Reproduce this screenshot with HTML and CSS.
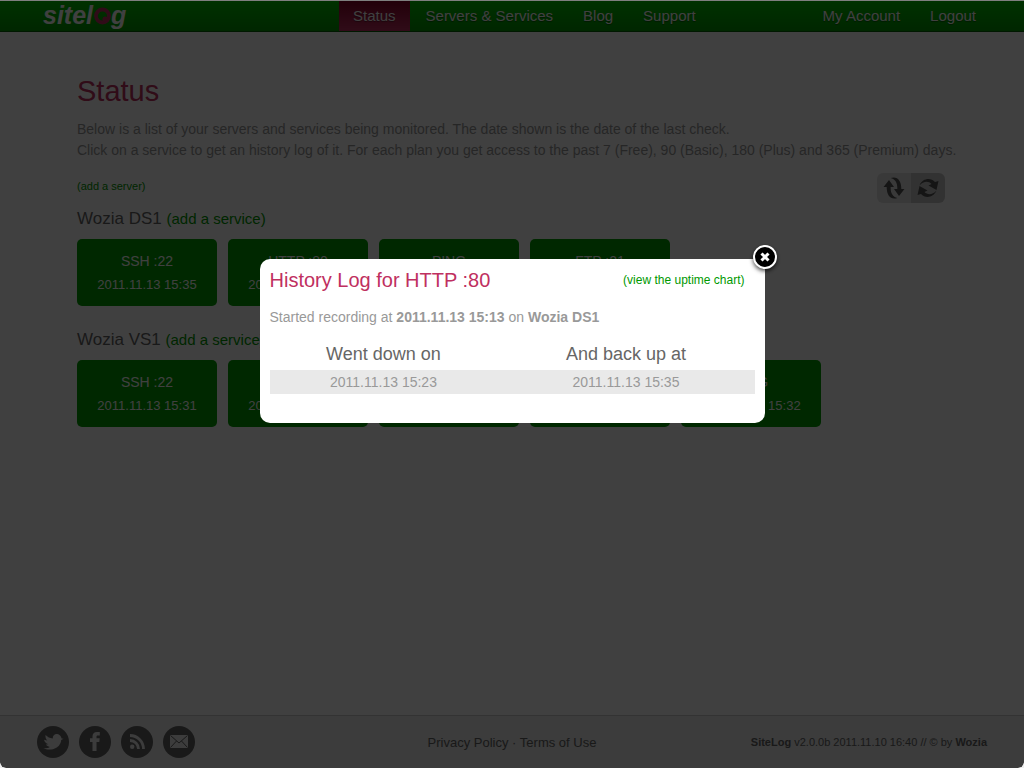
FILE: index.html
```html
<!DOCTYPE html>
<html lang="en">
<head>
<meta charset="utf-8">
<title>SiteLog - Status</title>
<link rel="stylesheet" href="styles.css">
</head>
<body>
<header class="topbar">
  <a class="logo" href="#" aria-label="sitelog">sitel<svg class="logo-o" viewBox="0 0 18 18" aria-hidden="true"><circle cx="9.500" cy="9" r="6.5" fill="none" stroke="#bf3060" stroke-width="3.800"/><circle cx="12.300" cy="12.200" r="2.800" fill="#bf3060"/></svg>g</a>
  <nav class="nav main-nav">
    <a class="active" href="#">Status</a>
    <a href="#">Servers &amp; Services</a>
    <a href="#">Blog</a>
    <a href="#">Support</a>
  </nav>
  <nav class="nav account-nav">
    <a href="#">My Account</a>
    <a href="#">Logout</a>
  </nav>
</header>

<main class="content">
  <h1>Status</h1>
  <p class="intro">Below is a list of your servers and services being monitored. The date shown is the date of the last check.<br>Click on a service to get an history log of it. For each plan you get access to the past 7 (Free), 90 (Basic), 180 (Plus) and 365 (Premium) days.</p>

  <div class="tools">
    <a class="add-server" href="#">(add a server)</a>
    <div class="refresh">
      <button type="button" aria-label="Auto refresh"><svg viewBox="0 0 24 24"><path d="M8.500 2C15.500 -0.500 19.500 5 19.300 13H22.500L17 20L12 13H15.300C15.600 7 13.500 3.200 8.500 2Z"/><path d="M15.500 22C8.500 24.500 4.500 19 4.700 11H1.500L7 4L12 11H8.700C8.400 17 10.500 20.800 15.500 22Z"/></svg></button>
      <button type="button" class="pressed" aria-label="Refresh now"><svg viewBox="0 0 24 24"><path d="M3.500 9.500C6.500 2 15 1.500 19 6L22.500 5L20.500 14L12.500 9.500L15.500 8C12.500 4.800 7.500 5 3.500 9.500Z"/><path d="M20.500 14.500C17.500 22 9 22.500 5 18L1.500 19L3.500 10L11.500 14.500L8.500 16C11.500 19.200 16.500 19 20.500 14.500Z"/></svg></button>
    </div>
  </div>

  <section class="server">
    <h2>Wozia DS1 <a href="#">(add a service)</a></h2>
    <div class="services">
      <button type="button">SSH :22<small>2011.11.13 15:35</small></button>
      <button type="button">HTTP :80<small>2011.11.13 15:35</small></button>
      <button type="button">PING<small>2011.11.13 15:35</small></button>
      <button type="button">FTP :21<small>2011.11.13 15:35</small></button>
    </div>
  </section>
  <section class="server">
    <h2>Wozia VS1 <a href="#">(add a service)</a></h2>
    <div class="services">
      <button type="button">SSH :22<small>2011.11.13 15:31</small></button>
      <button type="button">HTTP :80<small>2011.11.13 15:31</small></button>
      <button type="button">FTP :21<small>2011.11.13 15:31</small></button>
      <button type="button">SMTP :25<small>2011.11.13 15:31</small></button>
      <button type="button">PING<small>2011.11.13 15:32</small></button>
    </div>
  </section>
</main>

<footer class="footer">
  <div class="social">
    <a href="#" aria-label="Twitter"><svg viewBox="0 0 32 32"><path d="M6.500 22.300C9 23.500 12.500 24 16 23.200C21 22 24 18 24.200 14L26.500 12.800L24.600 12.600C24 10 22.500 8.500 20.300 8C17.800 7.600 15.800 9.400 15.700 12.400C13 12.300 10.500 11 8.500 9C8.200 11.500 9 13.300 10.300 14.500L7 13.700C7.500 16 9 17.500 11.300 18.200L9 18.600C10 20 11 20.700 12.800 20.900C11 22.100 9 22.500 6.500 22.300Z"/></svg></a>
    <a href="#" aria-label="Facebook"><svg viewBox="0 0 32 32"><path d="M13.500 25V16H11V12.300H13.500V10.500C13.500 7.500 15 6 18 6H20.800V9.600H19C17.900 9.600 17.500 10 17.500 11V12.300H20.700L20.300 16H17.500V25Z"/></svg></a>
    <a href="#" aria-label="RSS"><svg viewBox="0 0 32 32"><circle cx="11.200" cy="20.800" r="2.200"/><path d="M9 14.500A8.500 8.500 0 0 1 17.500 23M9 9.500A13.500 13.500 0 0 1 22.500 23" fill="none" stroke="#ededed" stroke-width="2.800"/></svg></a>
    <a href="#" aria-label="Email"><svg viewBox="0 0 32 32"><path d="M7 9H25V22H7Z"/><path d="M7.500 9.500L16 17L24.500 9.500M7.500 21.500L13.500 15M24.500 21.500L18.500 15" fill="none" stroke="#666"/></svg></a>
  </div>
  <p class="legal"><a href="#">Privacy Policy</a> · <a href="#">Terms of Use</a></p>
  <p class="version"><b>SiteLog</b> v2.0.0b 2011.11.10 16:40 // © by <a href="#"><b>Wozia</b></a></p>
</footer>

<div class="overlay">
  <section class="modal" role="dialog" aria-labelledby="log-title">
    <button type="button" class="close" aria-label="Close"><svg viewBox="0 0 20 20"><path d="M6.500 6.500L13.500 13.500M13.500 6.500L6.500 13.500"/></svg></button>
    <div class="modal-head">
      <h2 id="log-title">History Log for HTTP :80</h2>
      <a href="#">(view the uptime chart)</a>
    </div>
    <p class="started">Started recording at <b>2011.11.13 15:13</b> on <b>Wozia DS1</b></p>
    <table class="log">
      <thead><tr><th scope="col">Went down on</th><th scope="col">And back up at</th></tr></thead>
      <tbody><tr><td>2011.11.13 15:23</td><td>2011.11.13 15:35</td></tr></tbody>
    </table>
  </section>
</div>
</body>
</html>
```
FILE: styles.css
```css
* { box-sizing: border-box; }

html { background: #fff; }

body {
  margin: 0;
  min-height: 100vh;
  display: flex;
  flex-direction: column;
  font-family: "Liberation Sans", Arial, sans-serif;
  font-size: 14px;
  color: #999;
}

a { color: #009900; text-decoration: none; }
h1, h2, p { margin: 0; font-weight: normal; }
button { font-family: inherit; border: 0; cursor: pointer; }

.topbar {
  display: flex;
  height: 32px;
  padding: 0 34px 0 43px;
  background: linear-gradient(#00c400, #009800);
  border-top: 1px solid #fff;
  border-bottom: 1px solid #006000;
}

.logo {
  display: flex;
  width: 84px;
  align-items: center;
  padding-bottom: 2px;
  font-size: 25px;
  line-height: 28px;
  font-weight: bold;
  font-style: italic;
  color: #fff;
}
.logo-o { width: 18px; height: 18px; margin-top: 2px; flex: none; }

.nav { display: flex; gap: 2px; }
.main-nav { margin-left: 212px; }
.account-nav { margin-left: auto; }
.nav a {
  padding: 0 14px;
  font-size: 15px;
  line-height: 30px;
  color: #fff;
  text-shadow: 0 1px 1px rgba(0, 0, 0, .4);
}
.nav .active { background: linear-gradient(#880028, #bf3060); }

.content { flex: 1; padding: 42px 48px 40px 77px; }

h1 { font-size: 29px; line-height: 34px; color: #bf3060; }
.intro { margin-top: 11px; line-height: 21px; }

.tools {
  display: flex;
  justify-content: space-between;
  margin-top: 12px;
  padding-right: 31px;
}
.add-server { font-size: 11px; line-height: 26px; }
.refresh { display: flex; border-radius: 6px; overflow: hidden; }
.refresh button {
  width: 34px;
  height: 30px;
  padding: 3px 5px;
  background: #e4e4e4;
}
.refresh .pressed { background: #c8c8c8; }
.refresh svg { display: block; width: 24px; height: 24px; fill: #555; }

.server { margin-bottom: 18px; }
.server h2 { font-size: 17px; line-height: 32px; color: #666; }
.server h2 a { font-size: 15px; }
.services { display: flex; flex-wrap: wrap; gap: 11px; margin-top: 4px; }
.services button {
  width: 140px;
  padding: 10px 10px 9px;
  border-radius: 5px;
  background: #00a000;
  color: #fff;
  font-size: 14px;
  line-height: 24px;
}
.services small { display: block; font-size: 13px; }

.footer {
  display: grid;
  grid-template-columns: 1fr auto 1fr;
  align-items: center;
  padding: 10px 37px;
  border-top: 1px solid #ccc;
  background: #ededed;
  color: #666;
}
.footer p a { color: inherit; }
.social { display: flex; gap: 10px; }
.social a { width: 32px; height: 32px; border-radius: 50%; background: #666; }
.social svg { display: block; fill: #ededed; }
.legal { font-size: 13px; }
.version { font-size: 11px; text-align: right; }

.overlay {
  position: fixed;
  inset: 0;
  display: flex;
  justify-content: center;
  align-items: flex-start;
  padding-top: 258px;
  border-top: 1px solid rgba(0, 0, 0, .5);
  border-radius: 0 0 6px 6px;
  background: rgba(0, 0, 0, .75) padding-box;
}
.modal {
  position: relative;
  width: 505px;
  padding: 10px 10px 29px;
  border-radius: 10px;
  background: #fff;
}
.modal-head {
  display: flex;
  justify-content: space-between;
  align-items: center;
  padding-right: 10px;
}
.modal-head h2 { font-size: 20px; line-height: 22px; color: #bf3060; }
.modal-head a { font-size: 12px; }
.started { margin-top: 16px; line-height: 20px; }

.log {
  width: 100%;
  margin-top: 12px;
  border-collapse: collapse;
  table-layout: fixed;
  text-align: center;
}
.log th {
  padding: 0;
  font-size: 18px;
  line-height: 31px;
  font-weight: normal;
  color: #666;
}
.log th:first-child { width: 47%; }
.log td { padding: 0; line-height: 24px; background: #e9e9e9; }

.close {
  position: absolute;
  top: -14px;
  right: -12px;
  width: 24px;
  height: 24px;
  padding: 0;
  border: 2px solid #fff;
  border-radius: 50%;
  background: #000;
  box-shadow: 0 2px 4px rgba(0, 0, 0, .7);
}
.close svg { display: block; width: 20px; height: 20px; stroke: #fff; stroke-width: 3; fill: none; }
```
